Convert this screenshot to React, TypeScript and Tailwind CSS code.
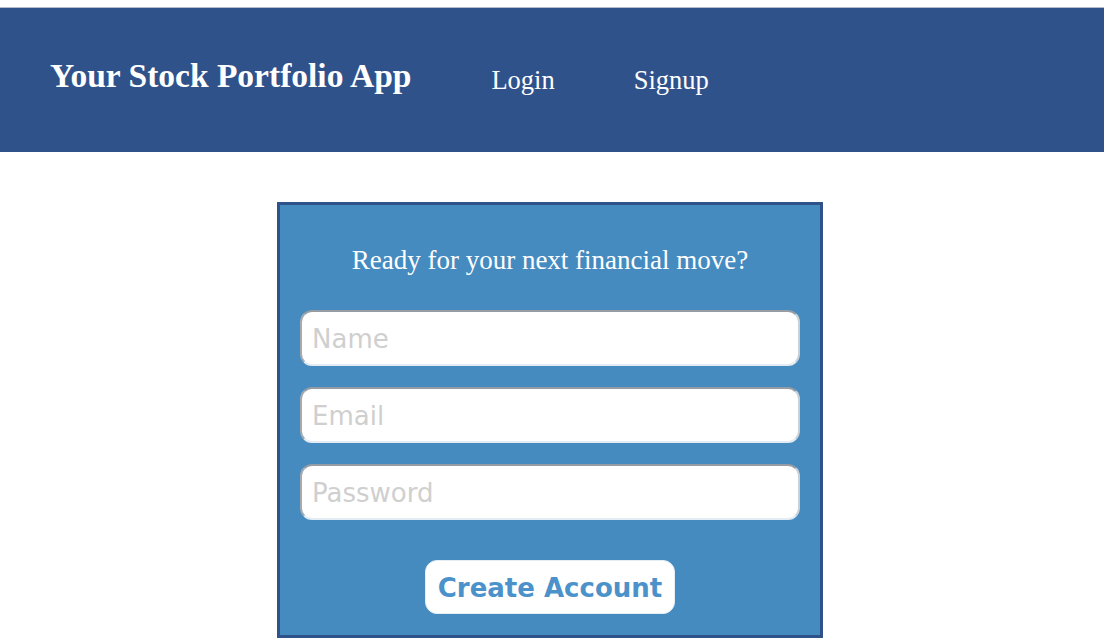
export default function App() {
  return (
    <div className="min-h-screen bg-white pt-[7px]">
      <header className="h-[145px] bg-[#30528b] border-t border-[#b4bccb] flex items-center pl-[50px] font-['Liberation_Serif',serif] text-white">
        <h1 className="text-[33.5px] font-bold leading-none -mt-[9px]">Your Stock Portfolio App</h1>
        <nav className="flex items-center ml-[80px] gap-[79px] text-[26.5px] leading-none">
          <a className="cursor-pointer">Login</a>
          <a className="cursor-pointer">Signup</a>
        </nav>
      </header>

      <div className="ml-[277px] mt-[50px] w-[546px] bg-[#458bc0] border-[3px] border-[#30528b] px-[20px] pt-[40px] pb-[21px]">
        <p className="text-center text-white text-[27px] leading-[30px] font-['Liberation_Serif',serif]">
          Ready for your next financial move?
        </p>
        <form className="mt-[35px] flex flex-col gap-[21px] font-['DejaVu_Sans',sans-serif]">
          {["Name", "Email", "Password"].map((p) => (
            <input
              key={p}
              type={p === "Password" ? "password" : "text"}
              placeholder={p}
              className="h-[56px] w-[500px] bg-white rounded-[12px] border-2 border-t-[#969ca3] border-l-[#a4aab0] border-r-[#c9d0d6] border-b-[#e3ecf4] px-[10px] pt-[2px] text-[26px] text-gray-700 placeholder:text-[#cfcfcf] outline-none"
            />
          ))}
          <div className="flex justify-center mt-[19px]">
            <button
              type="button"
              className="h-[54px] w-[250px] bg-white rounded-[12px] border border-[#e6eef5] pt-[3px] text-[26px] font-bold text-[#4c92ca]"
            >
              Create Account
            </button>
          </div>
        </form>
      </div>
    </div>
  );
}
